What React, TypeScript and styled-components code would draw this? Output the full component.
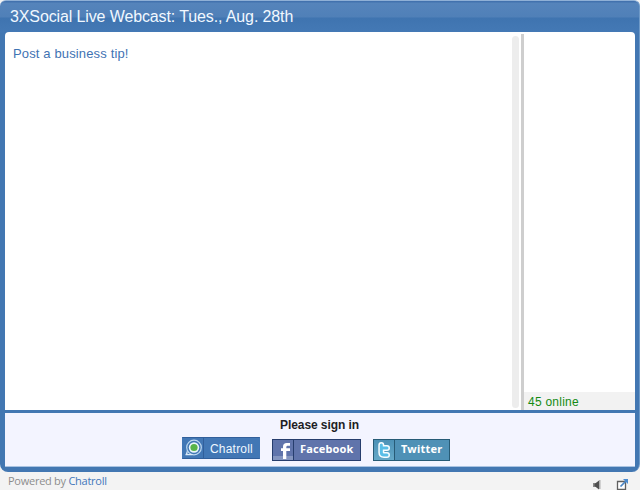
import React from "react";
import styled, { createGlobalStyle } from "styled-components";

const GlobalStyle = createGlobalStyle`
  *, *::before, *::after { box-sizing: border-box; }
  html, body, #root { height: 100%; }
  body {
    margin: 0;
    overflow: hidden;
    background: #f3f3f3;
    font-family: "Liberation Sans", Arial, sans-serif;
  }
`;

const Page = styled.div`
  display: flex;
  flex-direction: column;
  width: 640px;
  height: 490px;
`;

const Widget = styled.main`
  display: flex;
  flex-direction: column;
  height: 472px;
  padding: 0 4px 5px 5px;
  border-radius: 6px 6px 8px 8px;
  border-top: 1px solid #8fb0d6;
  border-right: 1px solid #6f9ac8;
  background: linear-gradient(#4272ae 0, #4272ae 1px, #5584bb 2px, #5080b8 16px, #3f74b0 17px, #4479b5 31px, #4277b2 32px);
`;

const Header = styled.header`
  height: 31px;
  padding: 6px 5px 0;
`;

const Title = styled.h1`
  margin: 0;
  font-size: 16px;
  line-height: 19px;
  font-weight: 400;
  letter-spacing: -0.12px;
  color: #f1f8ff;
  white-space: nowrap;
`;

const Body = styled.section`
  display: flex;
  height: 378px;
  background: #fff;
  border-radius: 4px 4px 0 0;
`;

const Messages = styled.div`
  flex: 1;
  padding: 14px 8px;
`;

const Message = styled.p`
  margin: 0;
  font-size: 13px;
  line-height: 16px;
  letter-spacing: 0.14px;
  color: #3f73b3;
`;

const ScrollTrack = styled.div`
  width: 7px;
  height: 372px;
  margin: 4px 2px 0 0;
  border-radius: 4px;
  background: #ededed;
`;

const Divider = styled.div`
  width: 3px;
  margin-top: 2px;
  background: #cecece;
`;

const Members = styled.aside`
  display: flex;
  flex-direction: column;
  justify-content: flex-end;
  width: 111px;
`;

const OnlineCount = styled.div`
  height: 18px;
  padding: 2px 4px 0;
  font-size: 12px;
  line-height: 16px;
  letter-spacing: 0.25px;
  color: #148b14;
  background: #f2f2f2;
`;

const SignIn = styled.section`
  display: flex;
  flex-direction: column;
  align-items: center;
  height: 54px;
  margin-top: 3px;
  padding-top: 5px;
  background: #f3f4ff;
  border-bottom: 1px solid #a9c3e2;
`;

const SignInTitle = styled.h2`
  margin: 0 1px 0 0;
  font-size: 12px;
  line-height: 14px;
  font-weight: 700;
  letter-spacing: -0.08px;
  color: #1d1d24;
`;

const Buttons = styled.div`
  display: flex;
  align-items: flex-end;
  gap: 12px;
  margin: 5px 0 0 -8px;
`;

const looks = {
  chatroll: { width: 78, bg: "#4277b5", edge: "#315f9b", lift: 2 },
  facebook: { width: 89, bg: "#6074ab", edge: "#263d6d", lift: 0 },
  twitter: { width: 77, bg: "#4f91b6", edge: "#275b76", lift: 0 },
};

const ServiceButton = styled.button<{ $look: keyof typeof looks }>`
  display: grid;
  grid-template-columns: 21px 1fr;
  width: ${(p) => looks[p.$look].width}px;
  height: 22px;
  padding: 0;
  margin-bottom: ${(p) => looks[p.$look].lift}px;
  border: 1px solid ${(p) => looks[p.$look].edge};
  background: ${(p) => looks[p.$look].bg};
  ${(p) => p.$look === "chatroll" && "border-left-color: #4277b5; border-right-color: #4277b5;"}
`;

const IconCell = styled.span<{ $look: keyof typeof looks }>`
  display: block;
  height: 20px;
  border-right: 1px solid ${(p) => looks[p.$look].edge};
  background: ${(p) => (p.$look === "twitter" ? "linear-gradient(#4c91b6, #65a9c8)" : "transparent")};
  svg { display: block; }
`;

const PlainLabel = styled.span`
  padding-left: 6px;
  text-align: left;
  font: 12px/22px "Liberation Sans", Arial, sans-serif;
  letter-spacing: 0.2px;
  color: #eff7ff;
`;

const BoldLabel = styled.span<{ $spacing: number }>`
  padding-left: 6px;
  text-align: left;
  white-space: nowrap;
  font: 700 11px/18px "Noto Sans", sans-serif;
  letter-spacing: ${(p) => p.$spacing}px;
  color: #fff;
`;

const Footer = styled.footer`
  display: flex;
  justify-content: space-between;
  height: 18px;
  padding: 0 11px 0 8px;
`;

const Powered = styled.div`
  font: 11px/18px "Open Sans", sans-serif;
  letter-spacing: -0.26px;
  color: #8d8d8d;
`;

const BrandLink = styled.a`
  color: #4377bb;
`;

const Tools = styled.div`
  display: flex;
  gap: 14px;
  padding-top: 7px;
`;

const ChatrollIcon = () => (
  <svg width="20" height="20" viewBox="0 0 20 20" fill="none">
    <circle cx="11" cy="9.5" r="7.3" stroke="#bdd8ef" strokeWidth="1.2" />
    <path d="M2.5 16.6h7M4 13.5c.2 1.4.2 2.2-1 3.2" stroke="#dceaf8" strokeWidth="1.3" />
    <circle cx="11" cy="9.5" r="5.2" fill="#e9f5fa" />
    <circle cx="11" cy="9.5" r="3.6" fill="#58b449" />
  </svg>
);

const FacebookIcon = () => (
  <svg width="20" height="20" viewBox="0 0 20 20">
    <rect y="16" width="20" height="4" fill="#8495bf" />
    <path d="M10 19v-8H8V8.2h2V6.8C10 4.2 11.4 3 13.7 3H17v2.7h-2c-1.2 0-1.7.5-1.7 1.5v1H17V11h-3.7v8z" fill="#fff" />
  </svg>
);

const TwitterIcon = () => (
  <svg width="20" height="20" viewBox="0 0 20 20" fill="none">
    <path d="M7.3 5v7.5c0 2 .9 2.4 2.7 2.4h3M7.8 8h5.2" stroke="#f7fdff" strokeWidth="6" strokeLinecap="round" strokeLinejoin="round" />
    <path d="M7.3 5v7.5c0 2 .9 2.4 2.7 2.4h3M7.8 8h5.2" stroke="#58bee7" strokeWidth="3" strokeLinecap="round" strokeLinejoin="round" />
  </svg>
);

const SpeakerIcon = () => (
  <svg width="10" height="11" viewBox="0 0 10 11">
    <path d="M1 4h3v4H1z" fill="#888" />
    <path d="M2.5 5L7 1.5v9L2.5 7z" fill="#505050" />
    <path d="M7 1h1.5v9H7z" fill="#b0b0b0" />
  </svg>
);

const PopoutIcon = () => (
  <svg width="13" height="12" viewBox="0 0 13 12" fill="none">
    <path d="M1.5 2.5h8v8h-8z" fill="#fff" stroke="#606060" strokeWidth="1.3" />
    <path d="M4.5 7.5L10 2" stroke="#4b86c5" strokeWidth="1.7" />
    <path d="M7 0h5v5z" fill="#4b8bd0" />
  </svg>
);

export default function App() {
  return (
    <Page>
      <GlobalStyle />
      <Widget>
        <Header>
          <Title>3XSocial Live Webcast: Tues., Aug. 28th</Title>
        </Header>
        <Body>
          <Messages>
            <Message>Post a business tip!</Message>
          </Messages>
          <ScrollTrack />
          <Divider />
          <Members>
            <OnlineCount>45 online</OnlineCount>
          </Members>
        </Body>
        <SignIn>
          <SignInTitle>Please sign in</SignInTitle>
          <Buttons>
            <ServiceButton $look="chatroll">
              <IconCell $look="chatroll"><ChatrollIcon /></IconCell>
              <PlainLabel>Chatroll</PlainLabel>
            </ServiceButton>
            <ServiceButton $look="facebook">
              <IconCell $look="facebook"><FacebookIcon /></IconCell>
              <BoldLabel $spacing={0.13}>Facebook</BoldLabel>
            </ServiceButton>
            <ServiceButton $look="twitter">
              <IconCell $look="twitter"><TwitterIcon /></IconCell>
              <BoldLabel $spacing={0.22}>Twitter</BoldLabel>
            </ServiceButton>
          </Buttons>
        </SignIn>
      </Widget>
      <Footer>
        <Powered>Powered by <BrandLink>Chatroll</BrandLink></Powered>
        <Tools>
          <SpeakerIcon />
          <PopoutIcon />
        </Tools>
      </Footer>
    </Page>
  );
}
